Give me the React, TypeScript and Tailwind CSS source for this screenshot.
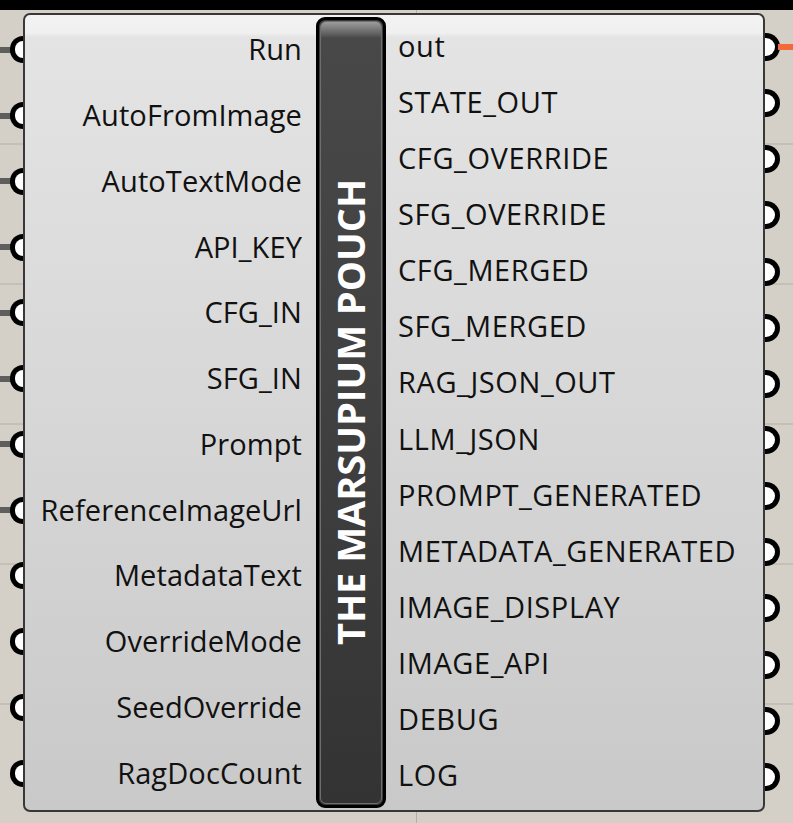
import React from "react";

const inputs = [
  { name: "Run", wire: true },
  { name: "AutoFromImage", wire: true },
  { name: "AutoTextMode", wire: true },
  { name: "API_KEY", wire: true },
  { name: "CFG_IN", wire: true },
  { name: "SFG_IN", wire: true },
  { name: "Prompt", wire: true },
  { name: "ReferenceImageUrl", wire: true },
  { name: "MetadataText", wire: false },
  { name: "OverrideMode", wire: false },
  { name: "SeedOverride", wire: false },
  { name: "RagDocCount", wire: false },
];

const outputs = [
  "out",
  "STATE_OUT",
  "CFG_OVERRIDE",
  "SFG_OVERRIDE",
  "CFG_MERGED",
  "SFG_MERGED",
  "RAG_JSON_OUT",
  "LLM_JSON",
  "PROMPT_GENERATED",
  "METADATA_GENERATED",
  "IMAGE_DISPLAY",
  "IMAGE_API",
  "DEBUG",
  "LOG",
];

function InputRow({ name, wire }: { name: string; wire: boolean }) {
  return (
    <div className="relative flex-1 flex items-center justify-end pr-[14px]">
      {wire && <div className="absolute left-[-25px] w-[14px] h-[6px] bg-[#5e5e5e]" />}
      <div className="absolute left-[-15px] w-[13px] h-[27px] rounded-l-full border-[5px] border-r-0 border-black bg-white" />
      <span className="pb-[2px] text-[29px] leading-none whitespace-nowrap tracking-[0.1px]">{name}</span>
    </div>
  );
}

function OutputRow({ name, wired }: { name: string; wired: boolean }) {
  return (
    <div className="relative flex-1 flex items-center">
      <span className="pb-[4px] text-[29px] leading-none whitespace-nowrap tracking-[0.6px]">{name}</span>
      <div className="absolute right-[-17px] w-[15px] h-[28px] rounded-r-full border-[5px] border-l-0 border-black bg-white" />
      {wired && <div className="absolute right-[-30px] w-[15px] h-[6px] bg-[#f26a3c]" />}
    </div>
  );
}

export default function App() {
  return (
    <div className="w-[793px] h-[823px] overflow-hidden flex flex-col bg-[#d4d0c8] bg-[linear-gradient(to_bottom,#c4c0b8_0px,#c4c0b8_2px,transparent_2px),linear-gradient(to_right,transparent_416px,#b4b0a8_416px,#b4b0a8_417px,transparent_417px)] bg-[size:100%_140px,100%_100%] bg-[position:0_3px,0_0] font-['Open_Sans','Noto_Sans',sans-serif] text-[#111]">
      <div className="h-[10px] bg-black" />

      <div className="ml-[23px] mt-[3px] w-[742px] h-[799px] rounded-[7px] border-2 border-[#383838] bg-[linear-gradient(to_bottom,#f3f3f3_0px,#f0f0f0_18px,#e4e4e4_22px,#c9c9c9_100%)] flex">
        {/* inputs */}
        <div className="w-[291px] flex flex-col pt-[2px] pb-[4px]">
          {inputs.map((p) => (
            <InputRow key={p.name} name={p.name} wire={p.wire} />
          ))}
        </div>

        {/* center bar */}
        <div className="my-[2px] w-[70px] rounded-[9px] border-[3px] border-black bg-[#3a3a3a] p-[1px]">
          <div className="h-full rounded-[6px] border border-[#6e6e6e] bg-[linear-gradient(to_bottom,#9c9c9c_0px,#606060_12px,#484848_16px,#404040_50%,#333333_100%)] flex items-center justify-center overflow-hidden">
            <span className="[writing-mode:vertical-rl] rotate-180 text-white font-bold text-[38px] leading-none whitespace-nowrap mr-[3px]">
              THE MARSUPIUM POUCH
            </span>
          </div>
        </div>

        {/* outputs */}
        <div className="flex-1 flex flex-col pt-[4px] pb-[5px] pl-[12px]">
          {outputs.map((o, i) => (
            <OutputRow key={o} name={o} wired={i === 0} />
          ))}
        </div>
      </div>
    </div>
  );
}
